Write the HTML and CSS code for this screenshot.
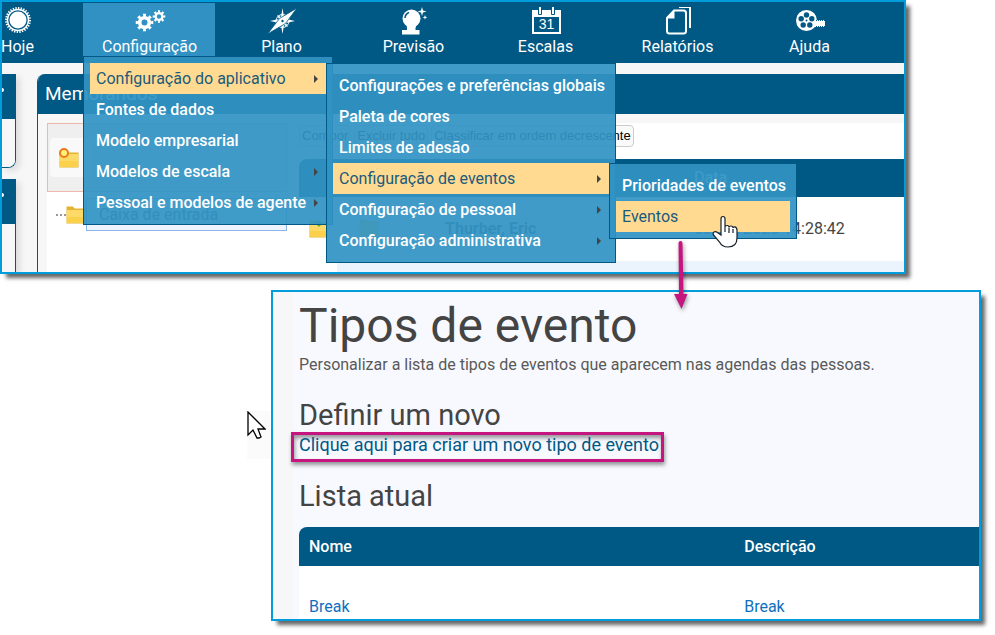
FILE: index.html
```html
<!DOCTYPE html>
<html lang="pt-BR">
<head>
  <meta charset="UTF-8">
  <title>Tipos de evento</title>
  <link rel="stylesheet" href="styles.css">
</head>
<body>
  <!-- Shared icons -->
  <svg class="defs" width="0" height="0">
    <symbol id="folder" viewBox="0 0 20 18">
      <path d="M0.5 2V0.5H7l1.5 2H19.500V17.500H0.500z" fill="#e3b431"/>
      <path d="M1 4h18v13H1z" fill="#fdd968"/>
      <path d="M1 11h18v6H1z" fill="#fbd04a"/>
    </symbol>
  </svg>

  <section class="window main-window">
    <nav class="topnav">
      <div class="nav-item">
        <a href="#">
          <svg class="nav-icon" viewBox="0 0 32 28"><circle cx="16" cy="13" r="8.5" fill="#fff"/><circle cx="16" cy="13" r="10.5" fill="none" stroke="#fff" stroke-width="1.4"/><circle cx="16" cy="13" r="12" fill="none" stroke="#fff" stroke-width="2" pathLength="56" stroke-dasharray="1 1"/></svg>
          <span>Hoje</span>
        </a>
      </div>
      <div class="nav-item active">
        <a href="#">
          <svg class="nav-icon" viewBox="0 0 32 28"><g fill="none" stroke="#fff"><circle cx="10.5" cy="15.5" r="4.8" stroke-width="3.600"/><circle cx="10.5" cy="15.5" r="7.300" stroke-width="3" pathLength="16" stroke-dasharray="1 1" stroke-dashoffset=".5"/><circle cx="25" cy="9.500" r="3.400" stroke-width="2.400"/><circle cx="25" cy="9.500" r="5.200" stroke-width="2.200" pathLength="16" stroke-dasharray="1 1" stroke-dashoffset=".5"/></g></svg>
          <span>Configuração</span>
        </a>
        <ul class="menu">
          <li class="open"><a href="#">Configuração do aplicativo</a><i class="arrow"></i>
            <ul class="menu wide">
              <li><a href="#">Configurações e preferências globais</a></li>
              <li><a href="#">Paleta de cores</a></li>
              <li><a href="#">Limites de adesão</a></li>
              <li class="open"><a href="#">Configuração de eventos</a><i class="arrow"></i>
                <ul class="menu narrow">
                  <li><a href="#">Prioridades de eventos</a></li>
                  <li class="open"><a href="#">Eventos</a></li>
                </ul>
              </li>
              <li><a href="#">Configuração de pessoal</a><i class="arrow"></i></li>
              <li><a href="#">Configuração administrativa</a><i class="arrow"></i></li>
            </ul>
          </li>
          <li><a href="#">Fontes de dados</a></li>
          <li><a href="#">Modelo empresarial</a></li>
          <li><a href="#">Modelos de escala</a><i class="arrow"></i></li>
          <li><a href="#">Pessoal e modelos de agente</a><i class="arrow"></i></li>
        </ul>
      </div>
      <div class="nav-item">
        <a href="#">
          <svg class="nav-icon" viewBox="0 0 32 28"><circle cx="16.500" cy="14" r="6.500" fill="none" stroke="#fff"/><g fill="#fff"><path d="M16.500 1l1.500 9 4-2-2 4 9 2-9 2 2 4-4-2-1.500 9-1.500-9-4 2 2-4-9-2 9-2-2-4 4 2z"/><path d="M31 1L19.500 16.500 1.500 27 13.500 11.500z" stroke="#005884" stroke-width=".8"/></g><circle cx="16.500" cy="14" r="1.200" fill="#005884"/></svg>
          <span>Plano</span>
        </a>
      </div>
      <div class="nav-item">
        <a href="#">
          <svg class="nav-icon" viewBox="0 0 32 28"><g fill="#fff"><circle cx="13.500" cy="11.500" r="9"/><path d="M8.500 18h10l-1 3v2h4v4.500H4V23h5v-2z"/><path d="M24 0l1 3.500 3.500 1-3.500 1-1 3.500-1-3.500-3.500-1 3.500-1z"/><path d="M27 8l.6 1.800 1.800.6-1.800.6-.6 1.800-.6-1.800-1.800-.6 1.800-.6z"/></g><path d="M7 11q.3-4 4-5.500" fill="none" stroke="#005884" stroke-width="1.500"/></svg>
          <span>Previsão</span>
        </a>
      </div>
      <div class="nav-item">
        <a href="#">
          <svg class="nav-icon" viewBox="0 0 32 28"><path d="M2 3h29v24H2z" fill="#fff"/><path d="M4 10h25v15H4z" fill="#005884"/><g fill="#fff" stroke="#005884"><path d="M8.500 -.5h3v8h-3zM21.500 -.5h3v8h-3z"/></g><text class="cal-day" x="16.500" y="22">31</text></svg>
          <span>Escalas</span>
        </a>
      </div>
      <div class="nav-item">
        <a href="#">
          <svg class="nav-icon" viewBox="0 0 32 28"><g fill="none" stroke="#fff" stroke-width="2"><path d="M12 3.500h9.500q2.500 0 2.500 2.500v18q0 2.500-2.500 2.500h-14Q5 26.500 5 24V11z"/><path d="M17 0h11v21"/></g><path d="M12.500 3v8.500H5z" fill="#fff"/></svg>
          <span>Relatórios</span>
        </a>
      </div>
      <div class="nav-item">
        <a href="#">
          <svg class="nav-icon" viewBox="0 0 32 28"><circle cx="12.500" cy="13.500" r="10.500" fill="#fff"/><g fill="#005884"><circle cx="12.500" cy="8" r="2.700"/><circle cx="17.800" cy="11.800" r="2.700"/><circle cx="15.800" cy="18" r="2.700"/><circle cx="9.200" cy="18" r="2.700"/><circle cx="7.200" cy="11.800" r="2.700"/><circle cx="12.500" cy="13.500" r="1"/></g><path d="M21 13h10v7H20z" fill="#fff"/><path d="M22 13.500h9M22 19.500h9" stroke="#005884" stroke-dasharray="1 1"/></svg>
          <span>Ajuda</span>
        </a>
      </div>
    </nav>

    <div class="workspace">
      <aside class="side">
        <div class="side-panel"><div class="side-head"></div><div class="side-body"></div></div>
        <div class="side-panel last"><div class="side-head"></div><div class="side-body"></div></div>
      </aside>
      <main class="memos">
        <h2 class="memos-title">Memorandos</h2>
        <div class="memos-body">
          <div class="tree">
            <div class="tree-tools">
              <button class="new-folder" type="button" aria-label="Nova pasta">
                <svg class="folder-new" viewBox="0 0 20 20"><use href="#folder" x="0" y="2" width="20" height="18"/><circle cx="5" cy="5" r="4" fill="#fff27a" stroke="#ee7a1a" stroke-width="2"/></svg>
              </button>
            </div>
            <div class="tree-row">
              <span class="dots"></span>
              <svg class="folder" viewBox="0 0 20 18"><use href="#folder"/></svg>
              <span class="tree-name">Caixa de entrada</span>
            </div>
          </div>
          <div class="messages">
            <div class="actions">
              <button type="button">Compor</button>
              <button type="button">Excluir tudo</button>
              <button type="button">Classificar em ordem decrescente</button>
            </div>
            <table class="message-table">
              <thead>
                <tr><th class="col-icon"></th><th class="col-from"></th><th>Data</th></tr>
              </thead>
              <tbody>
                <tr>
                  <td><svg class="folder" viewBox="0 0 20 18"><use href="#folder"/><path d="M10 0l4 3-4 4-4-4z" fill="#5fb52d"/></svg></td>
                  <td><div class="from"><svg class="folder" viewBox="0 0 20 18"><use href="#folder"/></svg><b>Thurber, Eric</b></div></td>
                  <td>03/10/2023 14:28:42</td>
                </tr>
                <tr class="next-row"><td></td><td></td><td></td></tr>
              </tbody>
            </table>
          </div>
        </div>
      </main>
    </div>

    <svg class="hand" viewBox="0 0 26 33"><path d="M9 20V4q0-2.500 2-2.500T13 4v8q0-1.500 2-1.500t2 2q0-1.500 2-1.500t2 2q0-1.200 1.800-1.200T25 15v8q0 9-9 9-6 0-8.500-5L1.500 20q-1-2 .5-3t3.500.5z" fill="#fff" stroke="#16202b" stroke-width="1.200"/><path d="M13 12v5M17 13v5M21 14v4" fill="none" stroke="#16202b" stroke-width="1.200"/></svg>
  </section>

  <div class="detail">
    <section class="window types-window">
      <h1>Tipos de evento</h1>
      <p>Personalizar a lista de tipos de eventos que aparecem nas agendas das pessoas.</p>
      <h2>Definir um novo</h2>
      <a class="create-link" href="#">Clique aqui para criar um novo tipo de evento</a>
      <h2 class="list-title">Lista atual</h2>
      <table class="types-table">
        <thead>
          <tr><th class="col-name">Nome</th><th>Descrição</th></tr>
        </thead>
        <tbody>
          <tr><td><a href="#">Break</a></td><td><a href="#">Break</a></td></tr>
        </tbody>
      </table>
    </section>
    <div class="pointer-box">
      <svg viewBox="0 0 19 28"><path d="M1 1v23l5-5 4 8h2l2-1-3-8h7z" fill="#fff" stroke="#000" stroke-width="1.300"/></svg>
    </div>
    <svg class="flow-arrow" viewBox="0 0 16 70"><path d="M5.500 3q0-2 2-2t2 2l1 51h4L8.500 69 1 54h5z" fill="#c5167f"/></svg>
  </div>
</body>
</html>
```
FILE: styles.css
```css
* { margin: 0; padding: 0; box-sizing: border-box; }
body { padding-bottom: 14px; font-family: Roboto, sans-serif; font-size: 16px; line-height: 20px; color: #444; background: #fff; }
a { color: inherit; text-decoration: none; }
ul { list-style: none; }
button { cursor: pointer; }
table { border-collapse: collapse; width: 100%; }
th { text-align: left; }
.defs { position: absolute; }

.window { border: 2px solid #009ddc; box-shadow: 5px 5px 4px -1px rgba(0, 0, 0, .6); }

/* Top window */
.main-window { position: relative; margin-right: 89px; background: #f7f7f7; overflow: hidden; }
.topnav { display: flex; margin-left: -51px; padding: 1px 0 7px; background: #005884; color: #fff; }
.nav-item { position: relative; flex: 0 0 132px; }
.nav-item > a { display: flex; flex-direction: column; align-items: center; padding: 4px 0 0 1px; }
.nav-item > a span { padding-top: 2px; line-height: 19px; }
.nav-item.active > a { background: #3191c2; }
.nav-icon { width: 32px; height: 28px; }
.cal-day { font: 14px "Liberation Sans", sans-serif; fill: #fff; text-anchor: middle; }

/* Drop-down menus */
.menu { position: absolute; top: 100%; left: 0; z-index: 2; width: 250px; padding: 6px; background: rgba(49, 147, 196, .93); border: 1px solid #005884; color: #fff; font-weight: 500; }
.menu li { position: relative; display: flex; align-items: center; justify-content: space-between; padding: 0 8px 0 6px; line-height: 31px; white-space: nowrap; }
.menu li.open { background: #ffda90; }
.menu li.open > a { color: #1b5a7c; font-weight: 400; }
.menu .menu { top: 0; left: 100%; }
.menu .wide { width: 290px; }
.menu .narrow { width: 188px; }
.arrow { width: 0; border: 4px solid transparent; border-left-color: #444; border-right: 0; }

/* Memo page behind the menus */
.workspace { display: flex; gap: 21px; padding-top: 11px; }
.side { flex: 0 0 14px; display: flex; flex-direction: column; gap: 11px; }
.side-panel { border-right: 1px solid #005884; border-bottom: 1px solid #005884; border-bottom-right-radius: 8px; box-shadow: 4px 3px 6px #ddd; overflow: hidden; }
.side-head { height: 45px; padding-top: 14px; background: #005884; }
.side-head::before { content: ""; display: block; width: 2px; height: 4px; border-radius: 0 2px 2px 0; background: #fff; }
.side-body { height: 48px; background: #f7f7f7; }
.side-panel.last { flex: 1; border-bottom: 0; border-radius: 0; }
.memos { flex: 1; border-left: 1px solid #005884; border-top-left-radius: 8px; overflow: hidden; }
.memos-title { padding: 0 7px; background: #005884; color: #fff; font-size: 19px; font-weight: 400; line-height: 40px; }
.memos-body { display: flex; gap: 12px; margin: 9px 0 0 9px; background: #fff; }
.tree { flex: 0 0 240px; }
.tree-tools { padding: 14px 2px; background: #efefef; border: 1px solid #f0b8ac; }
.new-folder { display: block; width: 40px; height: 39px; padding: 0 9px; border: 0; border-radius: 4px; background: #f9f9f9; }
.folder-new { display: block; width: 20px; height: 20px; }
.folder { flex: none; display: block; width: 20px; height: 18px; }
.tree-row { display: flex; align-items: center; margin-top: 6px; padding-left: 9px; }
.dots { width: 10px; border-top: 2px dotted #999; }
.tree-name { flex: 1; padding-left: 12px; line-height: 31px; border: 1px solid #8cb4e8; background: #edf4fd; }
.messages { flex: 1; }
.actions { display: flex; gap: 3px; padding: 2px 0 12px; }
.actions button { padding: 0 2px; border: 1px solid #ccc; border-radius: 4px; background: #fafafa; color: #000; font: 13px/20px "Liberation Sans", Arial, sans-serif; white-space: nowrap; }
.message-table { table-layout: fixed; }
.message-table th { height: 38px; background: #005884; color: #fff; font-weight: 400; }
.message-table th:first-child { border-top-left-radius: 8px; }
.message-table td { height: 64px; }
.message-table td:first-child { padding-left: 10px; }
.col-icon { width: 38px; }
.col-from { width: 357px; }
.from { display: flex; gap: 66px; padding-left: 22px; }
.message-table .next-row td { height: 11px; background: #ebf3fc; }
.message-table .next-row td:first-child { background: #fff; }
.hand { position: absolute; left: 710px; top: 213px; z-index: 3; width: 26px; height: 33px; }

/* Event types window */
.detail { position: relative; margin: 16px 14px 0 271px; }
.types-window { padding: 6px 0 0 26px; background: linear-gradient(to right, #f7f7f7 20px, #f8f9ff 20px); }
.types-window h1 { font-size: 48px; font-weight: 400; line-height: 56px; }
.types-window p { padding-top: 1px; color: #595959; }
.types-window h2 { margin-top: 23px; font-size: 29px; font-weight: 400; line-height: 34px; }
.types-window .list-title { margin: 17px 0 14px; }
.create-link { display: block; width: fit-content; margin-left: -8px; padding: 0 2px 4px 5px; border: 3px solid #c5167f; box-shadow: 1px 3px 4px rgba(0, 0, 0, .4), inset 1px 3px 4px rgba(0, 0, 0, .4); color: #005884; font-size: 18px; }
.types-table th { height: 39px; padding-left: 10px; background: #005884; color: #fff; font-weight: 500; }
.types-table th:first-child { border-top-left-radius: 8px; }
.types-table td { padding: 31px 0 2px 10px; background: #fff; color: #0f70c0; }
.col-name { width: 64%; }

/* Pointers drawn over the windows */
.pointer-box { position: absolute; left: -24px; top: 121px; width: 23px; height: 48px; background: #fbfbfb; }
.pointer-box svg { display: block; width: 19px; height: 28px; }
.flow-arrow { position: absolute; left: 402px; top: -50px; z-index: 3; width: 16px; height: 70px; filter: drop-shadow(1px 2px 2px rgba(0, 0, 0, .4)); }
```
